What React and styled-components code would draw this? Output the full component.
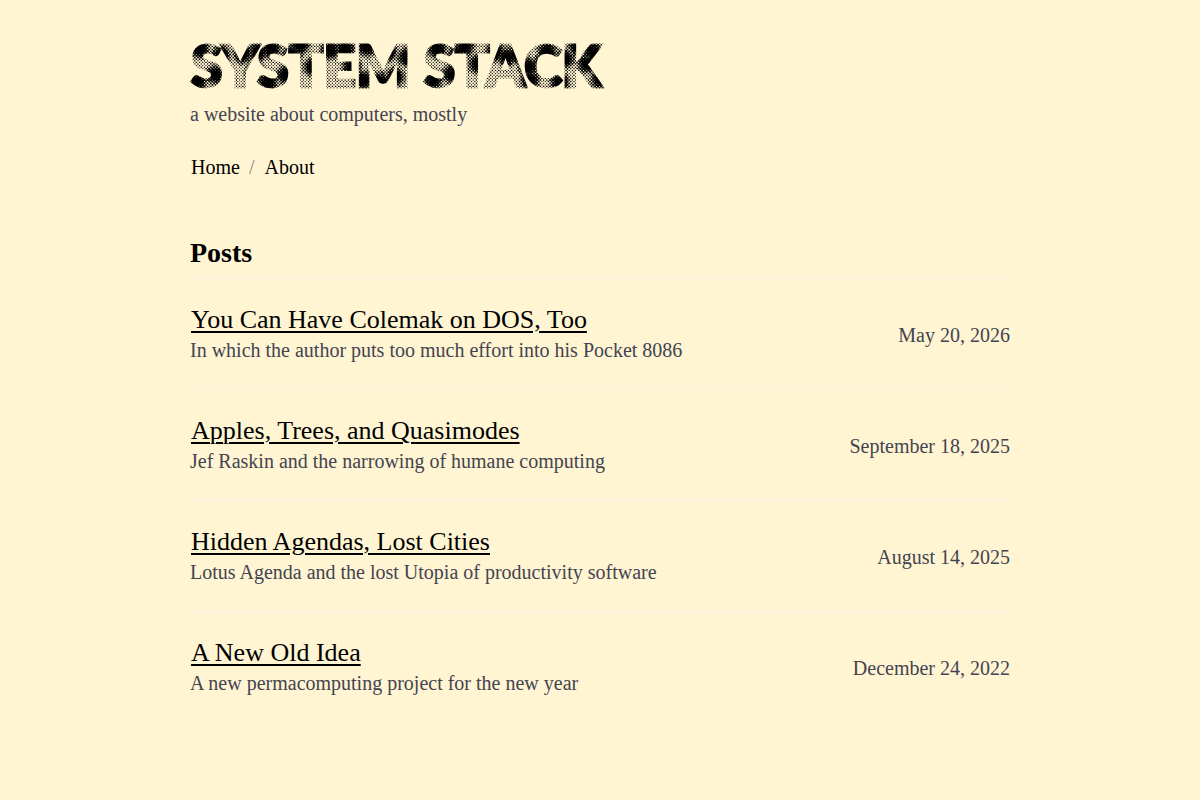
import React from 'react'
import styled, { createGlobalStyle } from 'styled-components'

const GlobalStyle = createGlobalStyle`
  body {
    margin: 0;
    background-color: #fff5d3;
    color: #000;
    font-family: "Liberation Serif", "Times New Roman", serif;
    font-size: 20px;
    line-height: 30px;
  }

  a {
    color: #000;
  }
`

const Page = styled.div`
  max-width: 820px;
  margin: 0 auto;
  padding: 40px 20px;
`

const HomeLink = styled.a`
  display: block;
  width: fit-content;
`

const Logo = styled.svg`
  display: block;
  width: 420px;
  max-width: 100%;
  height: auto;
  overflow: visible;
`

const LogoText = styled.text`
  font-family: Lato, "Open Sans", sans-serif;
  font-size: 57px;
  font-weight: 900;
  stroke-width: 3px;
  stroke-linejoin: miter;
`

const Tagline = styled.p`
  margin: 5px 0 0;
  color: #444450;
`

const Nav = styled.nav`
  display: flex;
  margin-top: 23px;
`

const NavLink = styled.a`
  padding: 0 1px;
  text-decoration: none;

  & + &::before {
    content: "/";
    margin: 0 10px 0 7px;
    color: #888;
  }
`

const Heading = styled.h2`
  margin: 50px 0 0;
  padding-bottom: 4px;
  font-size: 28px;
  line-height: 42px;
`

const PostList = styled.ul`
  margin: 0;
  padding: 0;
  list-style: none;
`

const Post = styled.li`
  display: flex;
  align-items: center;
  justify-content: space-between;
  gap: 20px;
  padding: 26px 0 24px;
  border-top: 1px solid #fff0e4;
`

const PostTitle = styled.h3`
  margin: 0;
  padding: 0 1px;
  font-size: 26px;
  font-weight: normal;
`

const PostLink = styled.a`
  text-decoration-thickness: 2px;
  text-underline-offset: 3px;
`

const Summary = styled.p`
  margin: 0;
  color: #444450;
`

const PostDate = styled.time`
  flex-shrink: 0;
  color: #444450;
`

const posts = [
  {
    title: 'You Can Have Colemak on DOS, Too',
    summary: 'In which the author puts too much effort into his Pocket 8086',
    date: 'May 20, 2026',
  },
  {
    title: 'Apples, Trees, and Quasimodes',
    summary: 'Jef Raskin and the narrowing of humane computing',
    date: 'September 18, 2025',
  },
  {
    title: 'Hidden Agendas, Lost Cities',
    summary: 'Lotus Agenda and the lost Utopia of productivity software',
    date: 'August 14, 2025',
  },
  {
    title: 'A New Old Idea',
    summary: 'A new permacomputing project for the new year',
    date: 'December 24, 2022',
  },
]

// centres of the dark patches in the halftone, in logo units
const shadows = [
  [10, 9], [31, 15], [25, 35], [7, 42],
  [53, 14], [68, 12], [65, 33],
  [81, 9], [102, 15], [96, 35], [78, 42],
  [110, 5], [140, 10], [123, 27],
  [155, 9], [177, 7], [162, 27], [173, 40],
  [198, 12], [190, 42], [205, 37], [217, 17],
  [247, 9], [267, 15], [262, 34], [243, 40],
  [275, 7], [305, 12], [288, 24],
  [328, 14], [317, 17], [338, 27], [340, 40],
  [357, 12], [352, 24], [375, 19], [370, 42],
  [388, 7], [403, 12], [397, 24], [410, 39],
]

function halftone(width, height) {
  const step = 1.6
  let d = ''
  for (let row = 0; row * step < height; row++) {
    for (let col = row % 2; col * step < width; col += 2) {
      const x = col * step
      const y = row * step
      const distance = Math.min(...shadows.map(([sx, sy]) => Math.hypot(x - sx, y - sy)))
      const r = Math.max(0.65, 1.8 - distance * 0.09)
      d += `M${x - r} ${y}a${r} ${r} 0 1 0 ${2 * r} 0a${r} ${r} 0 1 0 ${-2 * r} 0`
    }
  }
  return d
}

const dots = halftone(440, 54)

function SiteLogo() {
  return (
    <Logo viewBox="0 0 420 54" role="img" aria-label="System Stack">
      <defs>
        <pattern id="halftone" width="440" height="54" patternUnits="userSpaceOnUse">
          <path d={dots} />
        </pattern>
      </defs>
      <LogoText x="1" y="47" fill="url(#halftone)" stroke="url(#halftone)">
        SYSTEM STACK
      </LogoText>
    </Logo>
  )
}

function App() {
  return (
    <>
      <GlobalStyle />
      <Page>
        <header>
          <HomeLink href="/">
            <SiteLogo />
          </HomeLink>
          <Tagline>a website about computers, mostly</Tagline>
          <Nav>
            <NavLink href="/">Home</NavLink>
            <NavLink href="/about">About</NavLink>
          </Nav>
        </header>
        <main>
          <Heading>Posts</Heading>
          <PostList>
            {posts.map((post) => (
              <Post key={post.title}>
                <div>
                  <PostTitle>
                    <PostLink href="#">{post.title}</PostLink>
                  </PostTitle>
                  <Summary>{post.summary}</Summary>
                </div>
                <PostDate>{post.date}</PostDate>
              </Post>
            ))}
          </PostList>
        </main>
      </Page>
    </>
  )
}

export default App
